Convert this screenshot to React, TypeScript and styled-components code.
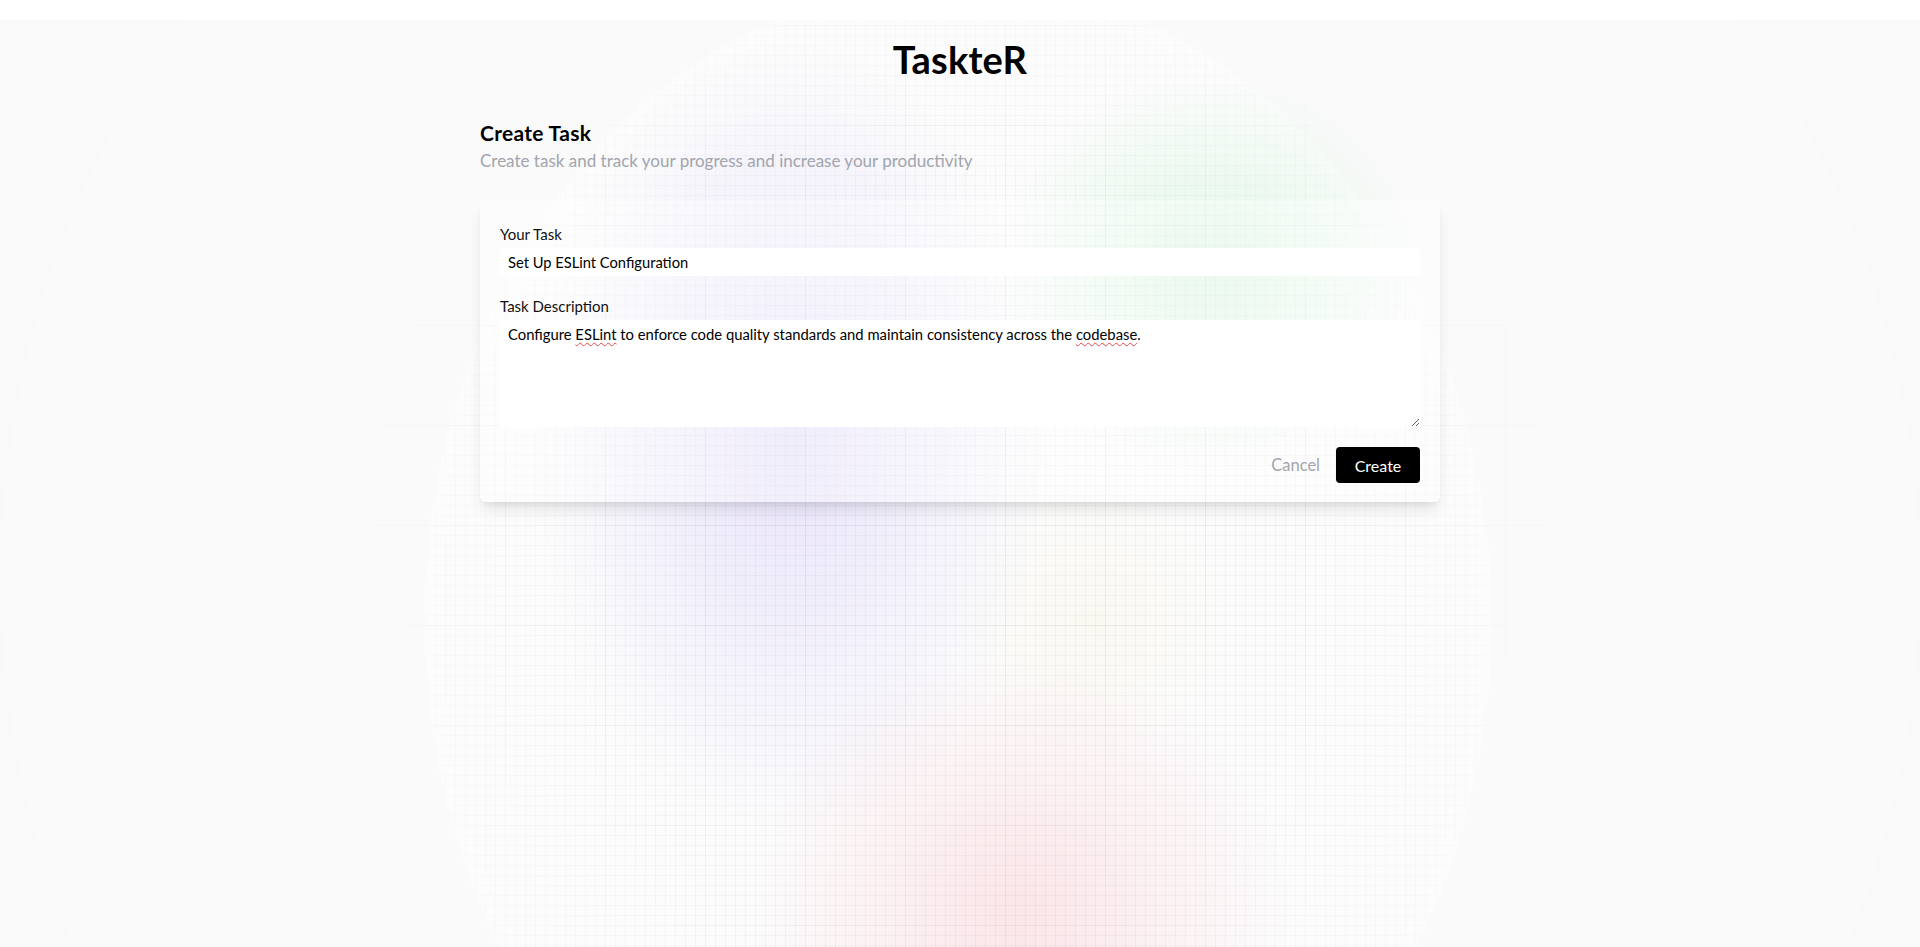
import React from "react";
import styled, { createGlobalStyle } from "styled-components";

const GlobalStyle = createGlobalStyle`
  html, body {
    margin: 0;
    padding: 0;
    background: #ffffff;
  }
  body {
    font-family: "Lato", "Liberation Sans", sans-serif;
    color: #000;
  }
  * { box-sizing: border-box; }
`;

const Page = styled.main`
  position: relative;
  margin-top: 20px;
  min-height: 927px;
  padding-top: 16px;
  overflow: hidden;
  background-color: #f9f9f9;
  background-image:
    radial-gradient(ellipse 320px 500px at 790px 420px, rgba(140, 110, 245, 0.17), rgba(140, 110, 245, 0) 80%),
    radial-gradient(ellipse 270px 250px at 1210px 250px, rgba(60, 220, 100, 0.14), rgba(60, 220, 100, 0) 80%),
    radial-gradient(ellipse 340px 320px at 1020px 890px, rgba(245, 100, 120, 0.15), rgba(245, 100, 120, 0) 80%),
    radial-gradient(ellipse 180px 170px at 1090px 600px, rgba(225, 205, 120, 0.08), rgba(225, 205, 120, 0) 80%),
    radial-gradient(ellipse 535px 640px at 958px 600px, #fcfcfc 99.6%, rgba(252, 252, 252, 0) 100%),
    radial-gradient(circle 960px at 960px 560px, #fafafa 99.8%, rgba(250, 250, 250, 0) 100%);

  &::before {
    content: "";
    position: absolute;
    inset: 0;
    pointer-events: none;
    background-image:
      linear-gradient(to right, rgba(0, 0, 0, 0.032) 1px, transparent 1px),
      linear-gradient(to bottom, rgba(0, 0, 0, 0.032) 1px, transparent 1px);
    background-size: 10px 10px;
    background-position: 5px 5px;
    -webkit-mask-image: radial-gradient(ellipse 535px 640px at 958px 600px, #000 60%, rgba(0,0,0,0.4) 99%, transparent 100%);
    mask-image: radial-gradient(ellipse 535px 640px at 958px 600px, #000 60%, rgba(0,0,0,0.4) 99%, transparent 100%);
  }

  &::after {
    content: "";
    position: absolute;
    inset: 0;
    pointer-events: none;
    background-image:
      linear-gradient(to right, rgba(0, 0, 0, 0.03) 1px, transparent 1px),
      linear-gradient(to bottom, rgba(0, 0, 0, 0.03) 1px, transparent 1px);
    background-size: 100px 100px;
    background-position: 5px 5px;
    -webkit-mask-image: radial-gradient(ellipse 720px 560px at 960px 470px, #000 40%, transparent 100%);
    mask-image: radial-gradient(ellipse 720px 560px at 960px 470px, #000 40%, transparent 100%);
  }
`;

const Content = styled.div`
  position: relative;
  z-index: 1;
  display: flex;
  flex-direction: column;
  align-items: center;
`;

const Brand = styled.h1`
  margin: 0;
  font-size: 38px;
  line-height: 46px;
  font-weight: 700;
  letter-spacing: 0.2px;
  color: #000;
`;

const Section = styled.section`
  width: 960px;
  margin-top: 37px;
  display: flex;
  flex-direction: column;
`;

const Heading = styled.h2`
  margin: 0;
  font-size: 21px;
  line-height: 28px;
  font-weight: 700;
  letter-spacing: 0.3px;
  color: #000;
`;

const Subtitle = styled.p`
  margin: 2px 0 0;
  font-size: 17px;
  line-height: 24px;
  font-weight: 400;
  color: #a1a5ad;
`;

const Card = styled.form`
  margin-top: 27px;
  padding: 24px 20px 19px;
  border-radius: 6px;
  background: rgba(255, 255, 255, 0.35);
  box-shadow: 0 10px 15px -3px rgba(0, 0, 0, 0.1), 0 4px 6px -4px rgba(0, 0, 0, 0.1);
  display: flex;
  flex-direction: column;
`;

const Label = styled.label<{ $spaced?: boolean }>`
  display: block;
  font-size: 15px;
  line-height: 20px;
  color: #111;
  margin-top: ${(p) => (p.$spaced ? "20px" : "0")};
  margin-bottom: 4px;
`;

const TextInput = styled.input`
  display: block;
  width: 100%;
  height: 28px;
  border: none;
  outline: none;
  border-radius: 3px;
  background: #ffffff;
  padding: 0 8px;
  font-family: inherit;
  font-size: 14.7px;
  color: #000;
`;

const AreaWrap = styled.div`
  position: relative;
  width: 100%;
`;

const TextArea = styled.textarea`
  display: block;
  width: 100%;
  height: 107px;
  border: none;
  outline: none;
  border-radius: 3px;
  background: #ffffff;
  padding: 4px 8px;
  font-family: inherit;
  font-size: 14.8px;
  line-height: 20px;
  color: #000;
  resize: vertical;
`;

const SpellMirror = styled.div`
  position: absolute;
  inset: 0;
  padding: 4px 8px;
  font-size: 14.8px;
  line-height: 20px;
  color: transparent;
  pointer-events: none;
  white-space: pre-wrap;
  overflow: hidden;
`;

const Misspelled = styled.span`
  text-decoration-line: underline;
  text-decoration-style: wavy;
  text-decoration-color: #e5484d;
  text-decoration-thickness: 1px;
  text-underline-offset: 2px;
`;

const Actions = styled.div`
  margin-top: 20px;
  display: flex;
  justify-content: flex-end;
  align-items: center;
  gap: 16px;
`;

const Button = styled.button<{ $primary?: boolean }>`
  height: 36px;
  padding: 0;
  width: ${(p) => (p.$primary ? "84px" : "auto")};
  border: none;
  border-radius: 4px;
  font-family: inherit;
  font-size: ${(p) => (p.$primary ? "16px" : "16.5px")};
  cursor: pointer;
  background: ${(p) => (p.$primary ? "#000" : "transparent")};
  color: ${(p) => (p.$primary ? "#fff" : "#a1a5ad")};
`;

const description =
  "Configure ESLint to enforce code quality standards and maintain consistency across the codebase.";

export default function App() {
  return (
    <>
      <GlobalStyle />
      <Page>
        <Content>
          <Brand>TaskteR</Brand>
          <Section>
            <Heading>Create Task</Heading>
            <Subtitle>Create task and track your progress and increase your productivity</Subtitle>
            <Card onSubmit={(e) => e.preventDefault()}>
              <Label htmlFor="task">Your Task</Label>
              <TextInput id="task" type="text" defaultValue="Set Up ESLint Configuration" />
              <Label htmlFor="desc" $spaced>
                Task Description
              </Label>
              <AreaWrap>
                <TextArea id="desc" defaultValue={description} spellCheck={false} />
                <SpellMirror aria-hidden>
                  Configure <Misspelled>ESLint</Misspelled> to enforce code quality standards and maintain
                  consistency across the <Misspelled>codebase</Misspelled>.
                </SpellMirror>
              </AreaWrap>
              <Actions>
                <Button type="button">Cancel</Button>
                <Button type="submit" $primary>
                  Create
                </Button>
              </Actions>
            </Card>
          </Section>
        </Content>
      </Page>
    </>
  );
}
